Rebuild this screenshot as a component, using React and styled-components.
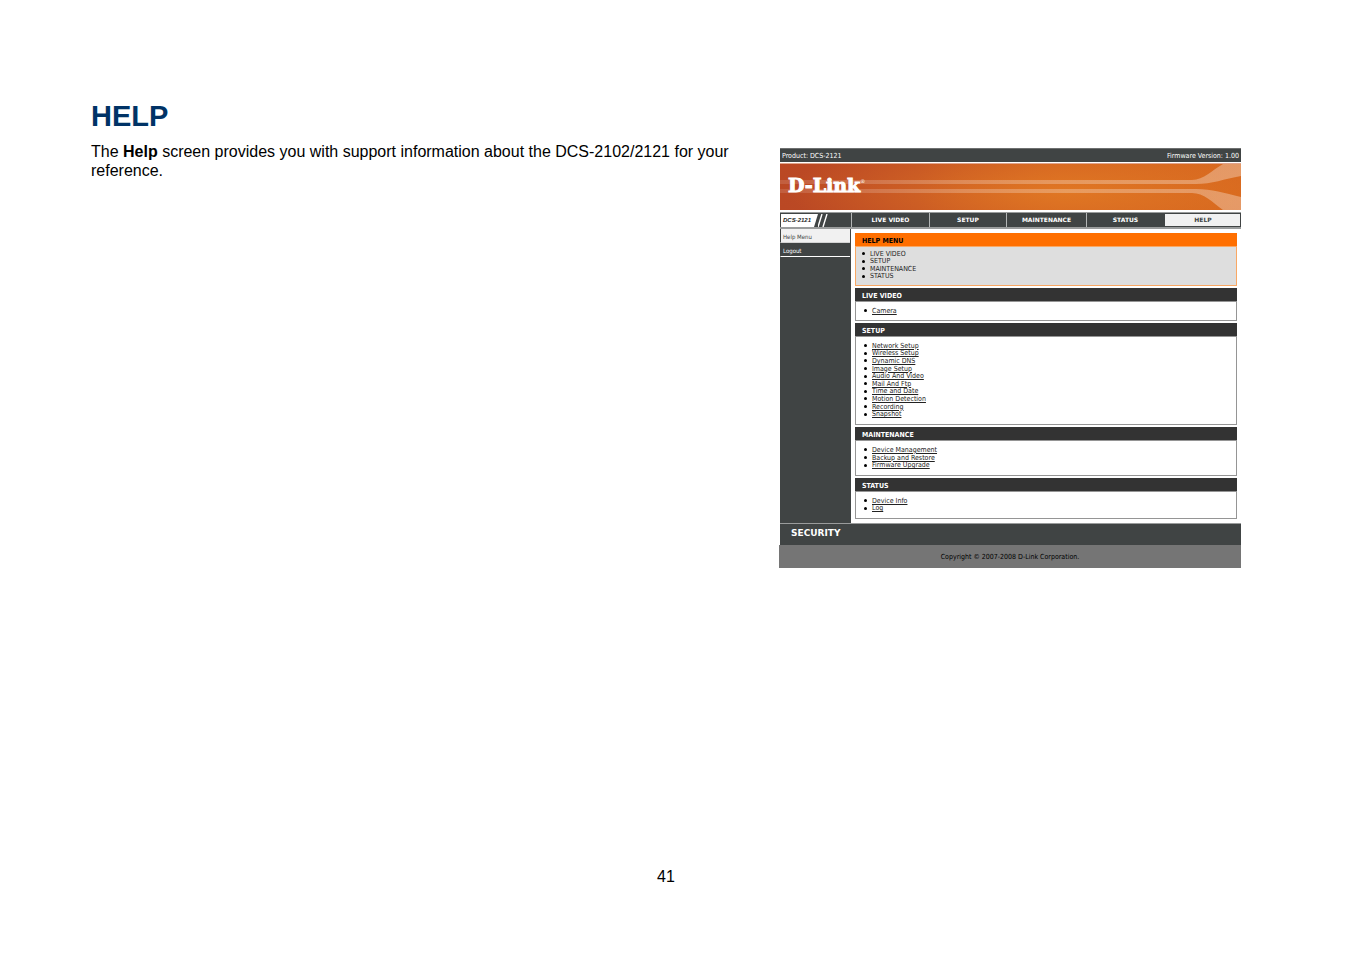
import React from 'react';
import styled, { createGlobalStyle } from 'styled-components';

const GlobalStyle = createGlobalStyle`
  * {
    box-sizing: border-box;
  }

  body {
    margin: 0;
    background: #fff;
    color: #000;
    font-family: 'Liberation Sans', Arial, sans-serif;
  }

  a {
    color: inherit;
    text-decoration: none;
  }
`;

const Page = styled.div`
  display: flex;
  flex-direction: column;
  min-height: 100vh;
  padding: 98px 110px 67px 91px;
`;

const Columns = styled.main`
  display: grid;
  grid-template-columns: 688fr 462fr;
  align-items: start;
`;

const Title = styled.h1`
  margin: 0 0 8px;
  color: #003366;
  font-size: 29px;
  line-height: 36px;
`;

const Intro = styled.p`
  margin: 0;
  font-size: 16px;
  line-height: 19px;
`;

const PageNumber = styled.footer`
  margin-top: auto;
  text-align: center;
  font-size: 16px;
  line-height: 20px;
`;

const Screen = styled.section`
  margin-top: 50px;
  font-family: 'DejaVu Sans Condensed', 'DejaVu Sans', sans-serif;
  font-size: 7px;
  line-height: 8px;
`;

const Inner = styled.div`
  margin-left: 1px;
`;

const TopBar = styled.div`
  display: flex;
  justify-content: space-between;
  height: 14px;
  padding: 3px 2px 0;
  border-top: 1px solid #6e7070;
  background: #404444;
  color: #fff;
`;

const Banner = styled.div`
  display: grid;
  height: 47px;
  margin: 1px 0 2px;
  border-top: 1px solid #dfa48c;
  background:
    radial-gradient(ellipse 60% 130% at 62% 60%, rgba(226, 122, 36, 0.9), rgba(216, 104, 32, 0) 100%),
    linear-gradient(90deg, #ba4824 0%, #bf4c24 30%, #cf5c20 60%, #d5641e 100%);

  > * {
    grid-area: 1 / 1;
  }
`;

const Streaks = styled.svg`
  display: block;
  width: 100%;
  height: 46px;
`;

const Brand = styled.div`
  padding: 10px 0 0 8px;
  color: #fff;
  font-family: 'DejaVu Serif', serif;
  font-size: 19px;
  font-weight: 700;
  line-height: 23px;
  -webkit-text-stroke: 1px #fff;

  sup {
    font-size: 5px;
    font-weight: 400;
    vertical-align: 9px;
    line-height: 5px;
    -webkit-text-stroke: 0;
  }
`;

const NavBar = styled.nav`
  display: grid;
  grid-template-columns: 71fr 78fr 77fr 80fr 78fr 77fr;
  height: 17px;
  border: 1px solid #9a9c9c;
  border-width: 1px 0 2px;
  background: #404444;
`;

const Model = styled.div`
  display: flex;
  border-top: 1px solid #404444;
  border-left: 1px solid #404444;
`;

const ModelName = styled.span`
  width: 37px;
  padding: 2px 0 0 2px;
  background: #fff;
  clip-path: polygon(0 0, 100% 0, 33px 100%, 0 100%);
  color: #222;
  font-family: 'Liberation Sans', Arial, sans-serif;
  font-size: 6px;
  font-style: italic;
  font-weight: 700;
`;

const Slashes = styled.svg`
  width: 12px;
  height: 13px;
`;

const NavLink = styled.a`
  padding-top: 3px;
  border-left: 1px solid #b4b6b6;
  background: ${(props) => (props.$active ? '#f1f1f1' : 'transparent')};
  color: ${(props) => (props.$active ? '#404444' : '#fff')};
  font-family: 'DejaVu Sans', sans-serif;
  font-size: 6px;
  font-weight: 700;
  text-align: center;
  outline: ${(props) => (props.$active ? '1px solid #404444' : 'none')};
  outline-offset: -1px;
`;

const Body = styled.div`
  display: grid;
  grid-template-columns: 71fr 390fr;
`;

const Sidebar = styled.aside`
  border-right: 1px solid #404444;
  background: #404444;
`;

const SideLink = styled.a`
  display: block;
  height: 14px;
  padding: 4px 0 0 2px;
  border-bottom: 1px solid ${(props) => (props.$active ? '#d4d4d4' : '#fff')};
  border-left: 1px solid #404444;
  background: ${(props) => (props.$active ? '#f1f1f1' : '#404444')};
  color: ${(props) => (props.$active ? '#404444' : '#fff')};
  font-size: 6px;
`;

const Content = styled.div`
  display: flex;
  flex-direction: column;
  gap: 2px;
  padding: 4px;
`;

const Panel = styled.section`
  border: 1px solid ${(props) => (props.$accent ? '#f9a864' : '#959595')};
  border-top: 0;
  background: ${(props) => (props.$accent ? '#dedede' : '#fff')};
`;

const PanelTitle = styled.h2`
  height: 14px;
  margin: 0 -1px;
  padding: 4px 0 0 7px;
  border-bottom: 1px solid ${(props) => (props.$accent ? '#f9a864' : '#959595')};
  background: ${(props) => (props.$accent ? '#ff6f00' : '#333')};
  color: ${(props) => (props.$accent ? '#000' : '#fff')};
  font-size: 7px;
  line-height: 8px;
`;

// rows share the height evenly, so long lists pack a little tighter than the line box
const LinkList = styled.ul`
  display: grid;
  grid-auto-rows: minmax(0, 1fr);
  height: ${(props) => props.$height}px;
  margin: ${(props) => (props.$accent ? '3px 0 5px 6px' : '5px 0 6px 8px')};
  padding: 0;
  list-style: none;
`;

const ListItem = styled.li`
  display: flex;
  align-items: center;
  gap: 5px;
  white-space: nowrap;

  &::before {
    content: '';
    width: 3px;
    height: 3px;
    border-radius: 50%;
    background: #000;
  }

  a {
    color: #222;
    text-decoration: ${(props) => (props.$accent ? 'none' : 'underline')};
  }
`;

const SecurityBar = styled.div`
  height: 22px;
  padding: 4px 0 0 11px;
  border-top: 1px solid #9a9c9c;
  background: #404444;
  color: #fff;
  font-family: 'DejaVu Sans', sans-serif;
  font-size: 9px;
  font-weight: 700;
  line-height: 10px;
`;

const Copyright = styled.div`
  height: 23px;
  padding-top: 8px;
  background: #757575;
  color: #000;
  text-align: center;
`;

const tabs = ['LIVE VIDEO', 'SETUP', 'MAINTENANCE', 'STATUS', 'HELP'];

const panels = [
  {
    title: 'HELP MENU',
    accent: true,
    height: 30,
    links: ['LIVE VIDEO', 'SETUP', 'MAINTENANCE', 'STATUS'],
  },
  { title: 'LIVE VIDEO', height: 7, links: ['Camera'] },
  {
    title: 'SETUP',
    height: 76,
    links: [
      'Network Setup',
      'Wireless Setup',
      'Dynamic DNS',
      'Image Setup',
      'Audio And Video',
      'Mail And Ftp',
      'Time and Date',
      'Motion Detection',
      'Recording',
      'Snapshot',
    ],
  },
  {
    title: 'MAINTENANCE',
    height: 23,
    links: ['Device Management', 'Backup and Restore', 'Firmware Upgrade'],
  },
  { title: 'STATUS', height: 15, links: ['Device Info', 'Log'] },
];

function CameraScreen() {
  return (
    <Screen>
      <Inner>
        <TopBar>
          <span>Product: DCS-2121</span>
          <span>Firmware Version: 1.00</span>
        </TopBar>
        <Banner>
          <Streaks viewBox="0 0 461 46" preserveAspectRatio="none" aria-hidden="true">
            <defs>
              <linearGradient id="streak" x1="0" x2="1">
                <stop offset="0" stopColor="#fff" stopOpacity="0.12" />
                <stop offset="0.4" stopColor="#fff" stopOpacity="0.24" />
                <stop offset="1" stopColor="#fff" stopOpacity="0.32" />
              </linearGradient>
            </defs>
            <path
              fill="url(#streak)"
              d="M0 16H412C424 16 432 6 443 0H461V12C444 15 432 20 416 20H0Z"
            />
            <path
              fill="url(#streak)"
              d="M0 25H416C432 25 444 29 461 33V46H443C432 38 424 29 412 29H0Z"
            />
          </Streaks>
          <Brand>
            D-Link<sup>®</sup>
          </Brand>
        </Banner>
        <NavBar>
          <Model>
            <ModelName>DCS-2121</ModelName>
            <Slashes viewBox="0 0 12 13" aria-hidden="true">
              <path d="M0 13L4 0M5 13L9 0" stroke="#fff" strokeWidth="1.4" />
            </Slashes>
          </Model>
          {tabs.map((tab) => (
            <NavLink key={tab} href="#" $active={tab === 'HELP'}>
              {tab}
            </NavLink>
          ))}
        </NavBar>
        <Body>
          <Sidebar>
            <SideLink href="#" $active>
              Help Menu
            </SideLink>
            <SideLink href="#">Logout</SideLink>
          </Sidebar>
          <Content>
            {panels.map((panel) => (
              <Panel key={panel.title} $accent={panel.accent}>
                <PanelTitle $accent={panel.accent}>{panel.title}</PanelTitle>
                <LinkList $height={panel.height} $accent={panel.accent}>
                  {panel.links.map((link) => (
                    <ListItem key={link} $accent={panel.accent}>
                      <a href="#">{link}</a>
                    </ListItem>
                  ))}
                </LinkList>
              </Panel>
            ))}
          </Content>
        </Body>
        <SecurityBar>SECURITY</SecurityBar>
      </Inner>
      <Copyright>Copyright © 2007-2008 D-Link Corporation.</Copyright>
    </Screen>
  );
}

function App() {
  return (
    <Page>
      <GlobalStyle />
      <Columns>
        <article>
          <Title>HELP</Title>
          <Intro>
            The <strong>Help</strong> screen provides you with support information about the
            DCS-2102/2121 for your reference.
          </Intro>
        </article>
        <CameraScreen />
      </Columns>
      <PageNumber>41</PageNumber>
    </Page>
  );
}

export default App;
